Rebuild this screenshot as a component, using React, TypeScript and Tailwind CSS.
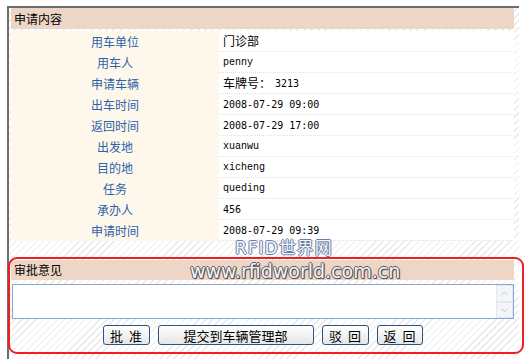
import { ChevronDown, ChevronUp } from "lucide-react";

interface Row {
  label: string;
  value: React.ReactNode;
}

const cjk = "font-['Noto_Sans_CJK_SC',sans-serif]";
const mono = "font-['Liberation_Mono',monospace] text-[10px]";
const digits = "font-['DejaVu_Sans_Mono',monospace] text-[10px]";

const rows: Row[] = [
  { label: "用车单位", value: <span className={`${cjk} text-[12px]`}>门诊部</span> },
  { label: "用车人", value: <span className={mono}>penny</span> },
  {
    label: "申请车辆",
    value: (
      <>
        <span className={`${cjk} text-[12px]`}>车牌号：</span>
        <span className={`${digits} ml-[4px]`}>3213</span>
      </>
    ),
  },
  { label: "出车时间", value: <span className={digits}>2008-07-29 09:00</span> },
  { label: "返回时间", value: <span className={digits}>2008-07-29 17:00</span> },
  { label: "出发地", value: <span className={mono}>xuanwu</span> },
  { label: "目的地", value: <span className={mono}>xicheng</span> },
  { label: "任务", value: <span className={mono}>queding</span> },
  { label: "承办人", value: <span className={digits}>456</span> },
  { label: "申请时间", value: <span className={digits}>2008-07-29 09:39</span> },
];

const buttons = [
  { text: "批  准", w: "w-[47px]" },
  { text: "提交到车辆管理部", w: "w-[156px]" },
  { text: "驳  回", w: "w-[47px]" },
  { text: "返  回", w: "w-[46px]" },
];

export default function App() {
  return (
    <div className="relative h-[359px] w-[529px] overflow-hidden bg-white text-black">
      <div className="ml-[7px] mt-[6px] h-[353px] w-[512px] border-l-2 border-t-2 border-[#6d6d6d] bg-[repeating-linear-gradient(135deg,#ffffff_0px,#ffffff_4px,#e9e9e9_4px,#e9e9e9_5px)] pl-[2px]">
        <div className="w-[503px]">
          <div className={`flex h-[21px] items-center bg-[#eed6c6] pl-[3px] text-[12px] ${cjk}`}>申请内容</div>
          <div className="mt-[2px] bg-white">
            {rows.map((r) => (
              <div key={r.label} className="flex h-[21px]">
                <div className={`flex w-[208px] items-center justify-center bg-[#fdf7ec] text-[12px] text-[#2d63a8] ${cjk}`}>
                  {r.label}
                </div>
                <div className="flex flex-1 items-center border-b border-dotted border-[#e2e2e2] pl-[4px]">{r.value}</div>
              </div>
            ))}
          </div>

          <div className={`mt-[19px] flex h-[20px] items-center bg-[#eed6c6] pl-[3px] text-[12px] ${cjk}`}>审批意见</div>
          <div className="ml-[1px] mt-[4px] flex h-[35px] w-[502px] border border-[#88a8cf] bg-white">
            <div className="flex-1" />
            <div className="flex w-[17px] flex-col">
              <div className="flex h-[17px] items-center justify-center border border-[#e4e7ee] bg-[#f4f5f8]">
                <ChevronUp size={11} strokeWidth={2} className="text-[#b9c0cc]" />
              </div>
              <div className="flex h-[16px] items-center justify-center border border-[#e4e7ee] bg-[#f4f5f8]">
                <ChevronDown size={11} strokeWidth={2} className="text-[#b9c0cc]" />
              </div>
            </div>
          </div>
          <div className="mt-[6px] flex justify-center gap-[8px]">
            {buttons.map((b) => (
              <button
                key={b.text}
                className={`${b.w} flex h-[20px] items-center justify-center whitespace-pre rounded-[3px] border border-[#2c5382] bg-[linear-gradient(#ffffff,#e6e6e6)] text-[13px] leading-none ${cjk}`}
              >
                {b.text}
              </button>
            ))}
          </div>
        </div>
      </div>

      {/* watermark */}
      <div className="absolute left-[235px] top-[234px] font-['DejaVu_Sans',sans-serif] text-[17px] tracking-[1px] text-[#f3f5fa] [text-shadow:1px_0_0_#6a7fa6,-1px_0_0_#6a7fa6,0_1px_0_#6a7fa6,0_-1px_0_#6a7fa6]">
        RFID<span className={cjk}>世界网</span>
      </div>
      <div className="absolute left-[190px] top-[257px] font-['DejaVu_Sans',sans-serif] text-[19px] text-[#f4f4f6] [text-shadow:1px_0_0_#555a66,-1px_0_0_#555a66,0_1px_0_#555a66,0_-1px_0_#555a66,1px_1px_1px_#333]">
        www.rfidworld.com.cn
      </div>

      {/* red annotation box */}
      <div className="absolute left-[8px] top-[257px] h-[97px] w-[516px] rounded-[9px] border-2 border-[#f01e1e]" />
    </div>
  );
}
